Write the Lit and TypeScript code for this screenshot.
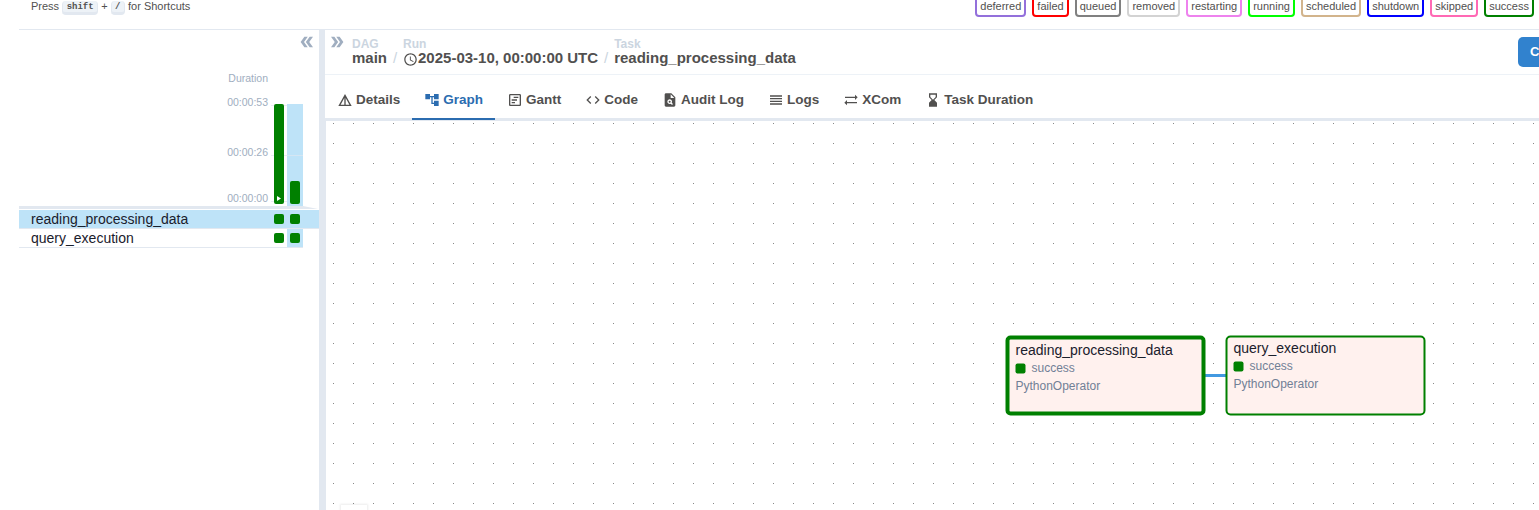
import { LitElement, html, css, svg } from "lit";
import { customElement } from "lit/decorators.js";

const paths: Record<string, string> = {
  details: "M12 3 2 21h20L12 3zm1 5.92L18.6 19H13V8.92zm-2 0V19H5.4L11 8.92z",
  graph: "M22 11V3h-7v3H9V3H2v8h7V8h2v10h4v3h7v-8h-7v3h-2V8h2v3z",
  gantt: "M19 5v14H5V5h14m0-2H5c-1.1 0-2 .9-2 2v14c0 1.1.9 2 2 2h14c1.1 0 2-.9 2-2V5c0-1.1-.9-2-2-2zM12 17H7v-2h5v2zm3-4H7v-2h8v2zm2-4h-7V7h7v2z",
  code: "M9.4 16.6 4.8 12l4.6-4.6L8 6l-6 6 6 6 1.4-1.4zm5.2 0 4.6-4.6-4.6-4.6L16 6l6 6-6 6-1.4-1.4z",
  audit: "M14 2H6c-1.1 0-2 .9-2 2v16c0 1.1.89 2 1.99 2H18c1.1 0 2-.9 2-2V8l-6-6zm1.04 17.45-1.88-1.88c-1.33.71-3.01.53-4.13-.59-1.37-1.37-1.37-3.58 0-4.95 1.37-1.37 3.58-1.37 4.95 0 1.12 1.12 1.31 2.8.59 4.13l1.88 1.88-1.41 1.41zM13 9V3.5L18.5 9H13zM11.5 13a1.5 1.5 0 1 0 0 3 1.5 1.5 0 0 0 0-3z",
  logs: "M3 15h18v-2H3v2zm0 4h18v-2H3v2zm0-8h18V9H3v2zm0-6v2h18V5H3z",
  xcom: "m22 8-4-4v3H3v2h15v3l4-4zM2 16l4 4v-3h15v-2H6v-3l-4 4z",
  duration: "m18 22-.01-6L14 12l3.99-4.01L18 2H6v6l4 4-4 3.99V22h12zM8 7.5V4h8v3.5l-4 4-4-4z",
  clock: "M11.99 2C6.47 2 2 6.48 2 12s4.47 10 9.99 10C17.52 22 22 17.52 22 12S17.52 2 11.99 2zM12 20c-4.42 0-8-3.58-8-8s3.58-8 8-8 8 3.58 8 8-3.58 8-8 8zm.5-13H11v6l5.25 3.15.75-1.23-4.5-2.67z",
  double: "M15.5 5H11l5 7-5 7h4.5l5-7zM8.5 5H4l5 7-5 7h4.5l5-7z",
};

const icon = (name: string, cls = "") =>
  html`<svg class="icon ${cls}" viewBox="0 0 24 24" fill="currentColor">${svg`<path fill-rule="evenodd" d=${paths[name]}></path>`}</svg>`;

const states = ["deferred", "failed", "queued", "removed", "restarting", "running", "scheduled", "shutdown", "skipped", "success"];

const tabs = [
  ["details", "Details"],
  ["graph", "Graph"],
  ["gantt", "Gantt"],
  ["code", "Code"],
  ["audit", "Audit Log"],
  ["logs", "Logs"],
  ["xcom", "XCom"],
  ["duration", "Task Duration"],
];

@customElement("app-root")
export class AppRoot extends LitElement {
  static styles = css`
    :host {
      display: flex;
      flex-direction: column;
      width: 100%;
      height: 510px;
      overflow: hidden;
      box-sizing: border-box;
      padding-left: 19px;
      background: #fff;
      color: #51504f;
      font-family: "Liberation Sans", Arial, sans-serif;
      font-size: 12px;
    }
    * { box-sizing: border-box; }
    .icon { display: block; width: 16px; height: 16px; flex: none; }
    .top {
      display: flex;
      flex: none;
      justify-content: space-between;
      height: 30px;
      border-bottom: 1px solid #e2e8f0;
      font-size: 11px;
      white-space: nowrap;
    }
    .keys { display: flex; padding-left: 12px; height: 13px; line-height: 13px; }
    kbd {
      display: block;
      height: 14px;
      margin: 1px 3px 0;
      padding: 0 3.5px;
      border: 1px solid #e2e8f0;
      border-bottom-width: 3px;
      border-top: 0;
      border-radius: 4px;
      background: #edf2f7;
      font: bold 9px/12px "Liberation Mono", monospace;
    }
    .states { display: flex; gap: 6.05px; margin-right: 5px; }
    .state {
      height: 23px;
      margin-top: -6px;
      padding: 0 3px;
      border: 2px solid;
      border-radius: 4px;
      line-height: 20px;
    }
    .state span { color: #51504f; }
    .deferred { border-color: mediumpurple; }
    .failed { border-color: red; }
    .queued { border-color: gray; }
    .removed { border-color: lightgrey; }
    .restarting { border-color: violet; }
    .running { border-color: lime; }
    .scheduled { border-color: tan; }
    .shutdown { border-color: blue; }
    .skipped { border-color: hotpink; }
    .success { border-color: green; }
    .main { display: flex; flex: 1; min-height: 0; }
    .grid { display: flex; flex-direction: column; width: 300px; flex: none; }
    .collapse { display: flex; justify-content: flex-end; height: 41px; padding: 3px 3px 0 0; color: #a0aec0; }
    .arrows { width: 18px; height: 18px; }
    .back { transform: rotate(180deg); }
    .chart { display: flex; height: 107px; justify-content: flex-end; padding-right: 16px; }
    .axis {
      display: flex;
      flex-direction: column;
      width: 60px;
      padding: 1px 3px 0 0;
      color: #a0aec0;
      font-size: 10.5px;
      line-height: 12px;
      text-align: right;
    }
    .axis .t53 { margin-top: 12px; }
    .axis .t26 { margin-top: 38px; }
    .axis .t00 { margin-top: 34px; }
    .plot {
      display: grid;
      grid-template-columns: 13px 16px;
      width: 32px;
      height: 102px;
      margin-top: 33px;
      padding-left: 3px;
      background: linear-gradient(#e8edf3, #e8edf3) 0 1px / 100% 1px no-repeat,
        linear-gradient(#e8edf3, #e8edf3) 0 51px / 100% 1px no-repeat,
        linear-gradient(#e8edf3, #e8edf3) 0 97px / 100% 1px no-repeat;
    }
    .run { display: flex; align-items: flex-end; height: 102px; padding-bottom: 2px; }
    .run.sel { justify-content: center; background: linear-gradient(#d5e6f3, #d5e6f3) 0 51px / 100% 1px no-repeat #bee3f8; }
    .bar { display: flex; width: 10px; justify-content: center; align-items: flex-end; background: green; border-radius: 2px; }
    .full { height: 100px; }
    .short { height: 23px; }
    .play { width: 4px; height: 5px; margin-bottom: 3px; background: #fff; clip-path: polygon(0 0, 100% 50%, 0 100%); }
    .rule { height: 3px; flex: none; margin-top: 28px; margin-bottom: 1px; background: #e2e8f0; clip-path: polygon(0 0, 284px 0, 299px 100%, 0 100%); }
    .row { display: flex; height: 19px; border-bottom: 1px solid #e2e8f0; margin-right: 16px; padding-left: 12px; color: #1a202c; font-size: 14px; line-height: 19px; }
    .row.sel { margin-right: 0; padding-right: 16px; background: #bee3f8; }
    .name { flex: 1; }
    .cell { display: flex; width: 16px; justify-content: center; align-items: center; }
    .cell.hl { background: #bee3f8; }
    .box { width: 10px; height: 10px; border-radius: 2px; background: green; }
    .divider { width: 6px; flex: none; background: #e2e8f0; }
    .panel { display: flex; flex: 1; min-width: 0; flex-direction: column; }
    .head { display: flex; height: 45px; flex: none; border-bottom: 1px solid #edf2f7; }
    .expand { width: 27px; flex: none; padding: 3px 0 0 3px; color: #a0aec0; }
    .crumbs { display: flex; flex: 1; padding-top: 8px; font-weight: bold; white-space: nowrap; }
    .crumb small { display: block; height: 12px; color: #cbd5e0; font-size: 12px; line-height: 13px; }
    .crumb div { display: flex; font-size: 15px; line-height: 16px; }
    .crumb .icon { width: 15px; height: 15px; margin-top: 2px; }
    .sep { width: 16px; padding-top: 12px; color: #cbd5e0; font: 15px/16px "Liberation Sans", sans-serif; text-align: center; }
    .clear { width: 21px; height: 30px; margin-top: 7px; padding-left: 12px; overflow: hidden; border-radius: 5px 0 0 5px; background: #3182ce; color: #fff; font-size: 13px; font-weight: bold; line-height: 30px; }
    .tabs { display: flex; height: 46px; flex: none; border-bottom: 3px solid #e2e8f0; }
    .tab { display: flex; gap: 3px; height: 45px; align-items: center; padding: 6px 12px 0; font-size: 13.5px; font-weight: bold; white-space: nowrap; border-bottom: 2px solid transparent; }
    .tab.active { color: #2b6cb0; border-color: #2b6cb0; }
    .canvas {
      position: relative;
      flex: 1;
      min-height: 0;
      border-left: 1px solid #e2e8f0;
      overflow: hidden;
      background: conic-gradient(from 90deg at 19px 19px, #888 25%, transparent 0) 8px 3px / 20px 20px;
    }
    .node { position: absolute; width: 200px; height: 80px; border: 2px solid green; border-radius: 5px; background: #fff1ee; padding: 2px 6px; color: #718096; font-size: 12px; transform: translate(0.5px, -0.5px); }
    .node.sel { border-width: 4px; }
    .node .box { margin-top: 1px; }
    .first { left: 679px; top: 215px; }
    .second { left: 899px; top: 215px; }
    .title { color: #1a202c; font-size: 14px; line-height: 17px; }
    .status { display: flex; gap: 6px; align-items: center; height: 18px; }
    .op { line-height: 18px; }
    .edge { position: absolute; left: 878px; top: 253px; width: 22px; height: 3px; background: #4299e1; }
    .control { position: absolute; left: 15px; top: 384px; width: 26px; height: 27px; background: #fff; box-shadow: 0 0 2px 1px rgba(0, 0, 0, 0.08); }
  `;

  private node(name: string, cls: string) {
    return html`<div class="node ${cls}">
      <div class="title">${name}</div>
      <div class="status"><i class="box"></i>success</div>
      <div class="op">PythonOperator</div>
    </div>`;
  }

  render() {
    return html`
      <div class="top">
        <div class="keys">Press <kbd>shift</kbd>+<kbd>/</kbd>for Shortcuts</div>
        <div class="states">${states.map((s) => html`<div class="state ${s}"><span>${s}</span></div>`)}</div>
      </div>
      <div class="main">
        <div class="grid">
          <div class="collapse">${icon("double", "arrows back")}</div>
          <div class="chart">
            <div class="axis">
              <span>Duration</span><span class="t53">00:00:53</span><span class="t26">00:00:26</span><span class="t00">00:00:00</span>
            </div>
            <div class="plot">
              <div class="run"><div class="bar full"><i class="play"></i></div></div>
              <div class="run sel"><div class="bar short"></div></div>
            </div>
          </div>
          <div class="rule"></div>
          <div class="row sel"><span class="name">reading_processing_data</span><span class="cell"><i class="box"></i></span><span class="cell"><i class="box"></i></span></div>
          <div class="row"><span class="name">query_execution</span><span class="cell"><i class="box"></i></span><span class="cell hl"><i class="box"></i></span></div>
        </div>
        <div class="divider"></div>
        <div class="panel">
          <div class="head">
            <div class="expand">${icon("double", "arrows")}</div>
            <div class="crumbs">
              <div class="crumb"><small>DAG</small><div>main</div></div>
              <span class="sep">/</span>
              <div class="crumb"><small>Run</small><div>${icon("clock")}2025-03-10, 00:00:00 UTC</div></div>
              <span class="sep">/</span>
              <div class="crumb"><small>Task</small><div>reading_processing_data</div></div>
            </div>
            <div class="clear">Clear</div>
          </div>
          <div class="tabs">
            ${tabs.map(([i, label]) => html`<div class="tab ${i === "graph" ? "active" : ""}">${icon(i)}<span>${label}</span></div>`)}
          </div>
          <div class="canvas">
            <div class="edge"></div>
            ${this.node("reading_processing_data", "first sel")} ${this.node("query_execution", "second")}
            <div class="control"></div>
          </div>
        </div>
      </div>
    `;
  }
}
